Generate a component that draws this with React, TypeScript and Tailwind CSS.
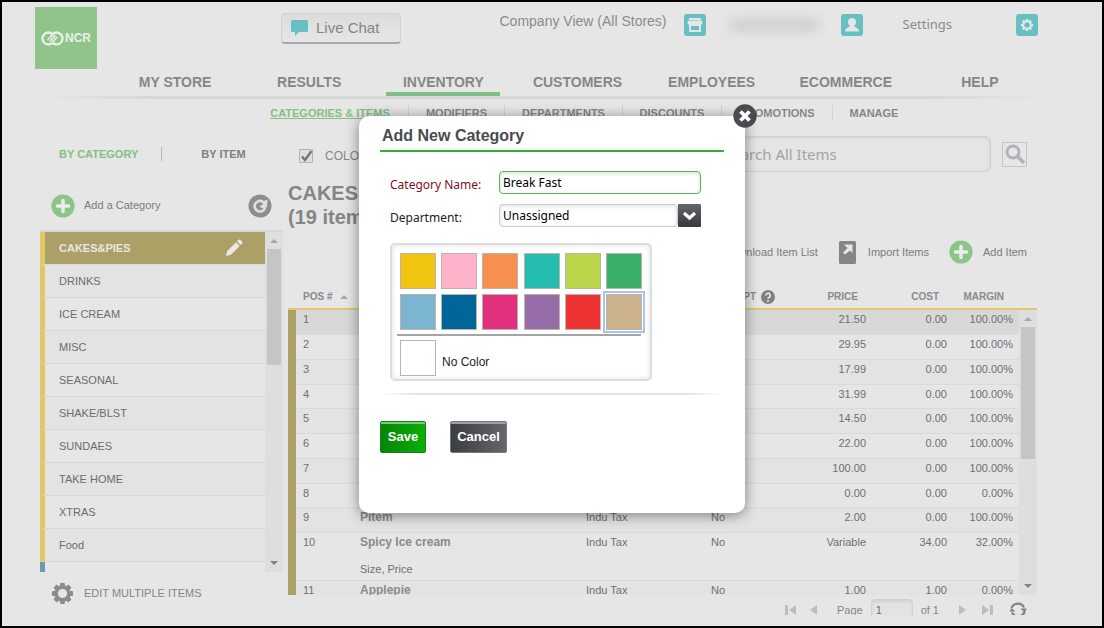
import { useState } from "react";
import type { ReactNode } from "react";

const navItems = ["MY STORE", "RESULTS", "INVENTORY", "CUSTOMERS", "EMPLOYEES", "ECOMMERCE", "HELP"];

const subNavItems = [
  { label: "CATEGORIES & ITEMS", width: "w-[157px]" },
  { label: "MODIFIERS", width: "w-[96px]" },
  { label: "DEPARTMENTS", width: "w-[118px]" },
  { label: "DISCOUNTS", width: "w-[99px]" },
  { label: "PROMOTIONS", width: "w-[111px]" },
  { label: "MANAGE", width: "w-[82px]" },
];

const categories = [
  "CAKES&PIES",
  "DRINKS",
  "ICE CREAM",
  "MISC",
  "SEASONAL",
  "SHAKE/BLST",
  "SUNDAES",
  "TAKE HOME",
  "XTRAS",
  "Food",
];

type Item = {
  pos: number;
  name?: string;
  note?: string;
  tax?: string;
  receipt?: string;
  price: string;
  cost: string;
  margin: string;
};

const items: Item[] = [
  { pos: 1, price: "21.50", cost: "0.00", margin: "100.00%" },
  { pos: 2, price: "29.95", cost: "0.00", margin: "100.00%" },
  { pos: 3, price: "17.99", cost: "0.00", margin: "100.00%" },
  { pos: 4, price: "31.99", cost: "0.00", margin: "100.00%" },
  { pos: 5, price: "14.50", cost: "0.00", margin: "100.00%" },
  { pos: 6, price: "22.00", cost: "0.00", margin: "100.00%" },
  { pos: 7, price: "100.00", cost: "0.00", margin: "100.00%" },
  { pos: 8, price: "0.00", cost: "0.00", margin: "0.00%" },
  { pos: 9, name: "Pitem", tax: "Indu Tax", receipt: "No", price: "2.00", cost: "0.00", margin: "100.00%" },
  {
    pos: 10,
    name: "Spicy Ice cream",
    note: "Size, Price",
    tax: "Indu Tax",
    receipt: "No",
    price: "Variable",
    cost: "34.00",
    margin: "32.00%",
  },
  { pos: 11, name: "Applepie", tax: "Indu Tax", receipt: "No", price: "1.00", cost: "1.00", margin: "0.00%" },
];

const swatches = [
  { name: "Yellow", color: "bg-[#f1c40f]" },
  { name: "Pink", color: "bg-[#ffb3cb]" },
  { name: "Orange", color: "bg-[#f78f50]" },
  { name: "Teal", color: "bg-[#24bdb0]" },
  { name: "Lime", color: "bg-[#bcd64c]" },
  { name: "Green", color: "bg-[#3aaf6a]" },
  { name: "Sky", color: "bg-[#7bb5d2]" },
  { name: "Blue", color: "bg-[#006699]" },
  { name: "Magenta", color: "bg-[#e2307c]" },
  { name: "Purple", color: "bg-[#966da9]" },
  { name: "Red", color: "bg-[#ee3432]" },
  { name: "Tan", color: "bg-[#ccb28a]" },
];

const GearShape = ({ hole }: { hole: string }) => (
  <>
    {[0, 45, 90, 135].map((angle) => (
      <rect key={angle} x="9.5" y="1" width="5" height="22" rx="1" transform={`rotate(${angle} 12 12)`} />
    ))}
    <circle cx="12" cy="12" r="8.5" />
    <circle cx="12" cy="12" r="4.8" fill={hole} />
  </>
);

const PlusCircle = () => (
  <svg viewBox="0 0 24 24" className="size-6 shrink-0">
    <circle cx="12" cy="12" r="11.6" fill="#8bc687" />
    <path d="M12 6.500v11M6.500 12h11" stroke="#ececec" strokeWidth="3.600" strokeLinecap="round" />
  </svg>
);

const Arrow = ({ up }: { up?: boolean }) => (
  <svg viewBox="0 0 8 4" className="h-1 w-2">
    <path d={up ? "M0 4L4 0l4 4z" : "M0 0h8L4 4z"} fill={up ? "#a8a8a8" : "#828282"} />
  </svg>
);

const ScrollBar = ({ thumb }: { thumb: string }) => (
  <div className="flex w-[18px] flex-1 flex-col items-center bg-[#dedede]">
    <div className="flex h-[17px] shrink-0 items-center">
      <Arrow up />
    </div>
    <div className={`w-[14px] bg-[#c5c5c5] ${thumb}`} />
    <div className="mt-auto flex h-[18px] shrink-0 items-center">
      <Arrow />
    </div>
  </div>
);

const TealIcon = ({ label, children }: { label: string; children: ReactNode }) => (
  <button aria-label={label} className="flex h-[22px] w-[22px] items-center justify-center rounded-[3px] bg-[#66bfc0]">
    <svg viewBox="0 0 22 22" className="size-[22px]" fill="#e6e6e6">
      {children}
    </svg>
  </button>
);

const Header = () => (
  <header>
    <div className="flex h-[67px] items-start pl-[33px] pr-[64px] pt-[5px]">
      <div className="flex h-[62px] w-[62px] shrink-0 items-center justify-center gap-px bg-[#91c48a] text-[#e9f0e8]">
        <svg viewBox="0 0 23 15" className="h-[15px] w-[23px]" fill="none" stroke="currentColor">
          <circle cx="7.500" cy="7.500" r="6" strokeWidth="2.400" />
          <circle cx="15.500" cy="7.500" r="6" strokeWidth="2.400" />
          <path d="M7 9.500l6-5M10 11l6-5" stroke="#91c48a" strokeWidth="3.400" />
          <path d="M6.500 9l6-5.500M10.500 11.500l6-5.500M8.500 10.300l6-5.500" strokeWidth="1.500" />
        </svg>
        <span className="text-xs font-semibold">NCR</span>
      </div>
      <button className="ml-[184px] mt-1.5 flex h-[31px] w-[120px] items-center gap-2 rounded-[4px] border border-[#d2d2d2] border-b-2 border-b-[#a9a9a9] bg-linear-to-b from-[#dcdcdc] to-[#e6e6e6] pl-[9px] text-[15px] text-[#858585]">
        <svg viewBox="0 0 17 16" className="h-4 w-[17px]" fill="#66bfc0">
          <path d="M1.500 0h14A1.500 1.500 0 0 1 17 1.500v9A1.500 1.500 0 0 1 15.500 12H8l-4 4v-4H1.500A1.500 1.500 0 0 1 0 10.500v-9A1.500 1.500 0 0 1 1.500 0z" />
        </svg>
        Live Chat
      </button>
      <div className="ml-auto flex items-center pt-1 text-[13px] text-[#8b8b8b]">
        <span className="pb-2 text-sm">Company View (All Stores)</span>
        <span className="ml-[17px]">
          <TealIcon label="Stores">
            <path d="M5 4h12v2H5zM4 6.500h14l.5 3a2 2 0 0 1-3 .8 2.500 2.500 0 0 1-3 0 2.500 2.500 0 0 1-3 0 2.500 2.500 0 0 1-3 0 2 2 0 0 1-3-.8z" />
            <path d="M5 10h12v8H5zM7 12v4h8v-4z" fillRule="evenodd" />
          </TealIcon>
        </span>
        <span className="ml-6 h-2.5 w-[88px] bg-[#c9c9c9] blur-[6px]" />
        <span className="ml-[23px]">
          <TealIcon label="Account">
            <path d="M11 4a4 4 0 0 1 4 4c0 1.800-.8 3-1.800 4 .2 1 4.300 1.500 4.800 5.500H4c.5-4 4.600-4.500 4.800-5.500C7.800 11 7 9.800 7 8a4 4 0 0 1 4-4z" />
          </TealIcon>
        </span>
        <a href="#settings" className="mx-10 font-['Noto_Sans',sans-serif]">
          Settings
        </a>
        <span className="ml-6">
          <TealIcon label="Settings">
            <g transform="translate(4.400 4.400) scale(.55)">
              <GearShape hole="#66bfc0" />
            </g>
          </TealIcon>
        </span>
      </div>
    </div>

    <nav className="grid h-[27px] grid-cols-7 pl-[106px] pr-[55px] text-center text-sm font-bold leading-[27px] text-[#868686]">
      {navItems.map((item) => (
        <a
          key={item}
          href="#nav"
          className={
            item === "INVENTORY"
              ? "mx-[10px] h-[27px] border-b-4 border-[#7fbf83]"
              : "mx-[10px] h-[27px]"
          }
        >
          {item}
        </a>
      ))}
    </nav>
    <div className="ml-[38px] mr-[60px] h-[3px] bg-[linear-gradient(to_right,transparent,#d6d6d6_12%,#d6d6d6_88%,transparent)]" />
    <nav className="flex h-[28px] items-center pl-[250px] text-[11px] font-bold text-[#868686]">
      {subNavItems.map((item, i) => (
        <div
          key={item.label}
          className={`flex h-4 shrink-0 items-center justify-center border-r border-[#d2d2d2] last:border-r-0 ${item.width}`}
        >
          <a href="#sub" className={i === 0 ? "text-[#83c082] underline" : ""}>
            {item.label}
          </a>
        </div>
      ))}
    </nav>
  </header>
);

const CategoryPanel = () => (
  <aside className="w-[243px] shrink-0 text-[11px]">
    <div className="flex h-[54px] items-center pl-[19px] font-bold text-[#808080]">
      <a href="#category" className="text-[#83c082]">
        BY CATEGORY
      </a>
      <span className="ml-[23px] mr-[39px] h-[14px] w-px bg-[#b8b8b8]" />
      <a href="#item">BY ITEM</a>
    </div>
    <div className="flex h-[49px] items-center px-[11px] text-[#7c7c7c]">
      <button className="flex items-center gap-[9px]">
        <PlusCircle />
        Add a Category
      </button>
      <button aria-label="Refresh" className="ml-auto">
        <svg viewBox="0 0 24 24" className="size-6" fill="none">
          <circle cx="12" cy="12" r="11.500" fill="#8e8e8e" />
          <path d="M15 7.800A5.300 5.300 0 1 0 17 14" stroke="#e0e0e0" strokeWidth="2.600" />
          <path d="M11 11.500c1.500.5 3 0 4-1.500l-1.500-2 6-2.500-.500 7.500c-3 2-6 1.500-8-1.500z" fill="#e0e0e0" />
        </svg>
      </button>
    </div>
    <div className="flex h-[342px] overflow-hidden border-t-2 border-[#d6d6d6]">
      <ul className="flex-1">
        {categories.map((category, i) => (
          <li
            key={category}
            className={
              i === 0
                ? "flex h-[33px] items-center border-b border-l-[5px] border-b-[#dcdcdc] border-l-[#e0c868] bg-[#ada067] pl-[14px] pr-[22px] font-bold text-[#e6e6e6]"
                : "flex h-[33px] items-center border-b border-l-[5px] border-b-[#dadada] border-l-[#e0c868] pl-[14px] text-[#6c6c6c] even:bg-[#e3e3e3]"
            }
          >
            {category}
            {i === 0 && (
              <svg viewBox="0 0 18 18" className="ml-auto size-[18px]" fill="#e8e8e8">
                <path d="M1 17l1.200-5L11 3.200 14.800 7 6 15.800zM12 2.200l1-1a2 2 0 0 1 2.800 0l1 1a2 2 0 0 1 0 2.800l-1 1z" />
              </svg>
            )}
          </li>
        ))}
        <li className="h-[33px] border-l-[5px] border-l-[#6b9ab5]" />
      </ul>
      <div className="flex flex-col">
        <ScrollBar thumb="h-[116px]" />
      </div>
    </div>
    <button className="mt-[10px] flex items-center gap-[10px] pl-[11px] text-[#858585]">
      <svg viewBox="0 0 24 24" className="size-[23px]" fill="#8c8c8c">
        <GearShape hole="#e6e6e6" />
      </svg>
      EDIT MULTIPLE ITEMS
    </button>
  </aside>
);

const ItemTable = () => (
  <div className="flex h-[309px] overflow-hidden">
    <table className="h-max flex-1 table-fixed border-separate border-spacing-0 text-left text-[11px] text-[#6f6f6f]">
      <thead className="text-[10px] text-[#8a8a8a]">
        <tr className="h-6 [&>th]:border-b-2 [&>th]:border-[#e2c964] [&>th]:pb-px">
          <th className="w-[72px] pl-[15px]">
            <span className="flex items-center gap-2">
              POS # <Arrow up />
            </span>
          </th>
          <th>NAME</th>
          <th className="w-[125px]">TAX</th>
          <th className="w-[86px]">
            <span className="flex items-center justify-end gap-[5px] pr-[22px]">
              RECEIPT
              <svg viewBox="0 0 14 14" className="size-[14px] shrink-0" fill="none">
                <circle cx="7" cy="7" r="7" fill="#808080" />
                <path d="M4.800 5.400a2.200 2.200 0 1 1 3.200 2c-.8.4-1 .7-1 1.300" stroke="#e6e6e6" strokeWidth="1.700" />
                <circle cx="7" cy="10.900" r="1" fill="#e6e6e6" />
              </svg>
            </span>
          </th>
          <th className="w-[75px] pr-[14px] text-right">PRICE</th>
          <th className="w-[81px] pr-[14px] text-right">COST</th>
          <th className="w-[66px] pr-[15px] text-right">MARGIN</th>
        </tr>
      </thead>
      <tbody className="align-top leading-[19px]">
        {items.map((item) => (
          <tr
            key={item.pos}
            className="h-[25px] odd:bg-[#e3e3e3] first:bg-[#d8d8d8]! [&:nth-child(4n)]:h-6 [&>td+td]:border-b [&>td+td]:border-[#dadada]"
          >
            <td className="pl-[15px] shadow-[inset_8px_0_0_#ada067,inset_0_-1px_0_#dadada]">{item.pos}</td>
            <td>
              <span className="block text-xs font-bold leading-[19px] text-[#8a8a8a]">{item.name}</span>
              {item.note && <span className="block pb-px pt-2">{item.note}</span>}
            </td>
            <td>{item.tax}</td>
            <td>{item.receipt}</td>
            <td className="pr-1.5 text-right">{item.price}</td>
            <td className="pr-1.5 text-right">{item.cost}</td>
            <td className="pr-1.5 text-right">{item.margin}</td>
          </tr>
        ))}
      </tbody>
    </table>
    <div className="flex flex-col">
      <div className="h-6 border-b-2 border-[#e2c964]" />
      <ScrollBar thumb="h-[132px]" />
    </div>
  </div>
);

const Pager = () => (
  <div className="flex h-5 items-start justify-end overflow-hidden pr-[10px] text-[11px] text-[#868686]">
    <div className="flex h-[30px] items-center">
      <button aria-label="First page">
        <svg viewBox="0 0 11 10" className="h-[10px] w-[11px]" fill="#bdbdbd">
          <path d="M0 0h3v10H0zM11 0v10L4 5z" />
        </svg>
      </button>
      <button aria-label="Previous page" className="ml-[14px]">
        <svg viewBox="0 0 7 10" className="h-[10px] w-[7px]" fill="#bdbdbd">
          <path d="M7 0v10L0 5z" />
        </svg>
      </button>
      <label className="ml-5 flex items-center gap-2">
        Page
        <input
          defaultValue="1"
          className="h-[22px] w-[42px] rounded-[4px] border border-[#d0d0d0] bg-[#e3e3e3] pl-1 text-[#6c6c6c] shadow-[inset_0_2px_3px_#d2d2d2]"
        />
      </label>
      <span className="ml-2">of 1</span>
      <button aria-label="Next page" className="ml-5">
        <svg viewBox="0 0 7 10" className="h-[10px] w-[7px]" fill="#bdbdbd">
          <path d="M0 0v10l7-5z" />
        </svg>
      </button>
      <button aria-label="Last page" className="ml-4">
        <svg viewBox="0 0 11 10" className="h-[10px] w-[11px]" fill="#bdbdbd">
          <path d="M8 0h3v10H8zM0 0v10l7-5z" />
        </svg>
      </button>
      <button aria-label="Reload" className="ml-4">
        <svg viewBox="0 0 18 16" className="h-4 w-[18px]" fill="none" stroke="#828282" strokeWidth="2.200">
          <path d="M2.500 6a6.800 6.800 0 0 1 12.500-.5M15.500 10a6.800 6.800 0 0 1-12.500.5" />
          <path d="M11.500 6.500h6L16 11zM.5 9.500h6L2.500 6z" fill="#828282" stroke="none" />
        </svg>
      </button>
    </div>
  </div>
);

const ItemPanel = () => (
  <section className="min-w-0 flex-1 pl-[5px]">
    <div className="flex h-[54px] items-center pr-[10px]">
      <label className="flex items-center gap-3 pl-[11px] pt-1 text-xs text-[#858585]">
        <input type="checkbox" defaultChecked className="peer sr-only" />
        <svg viewBox="0 0 14 14" className="size-[14px]" fill="none">
          <path d="M.5.500h13v13H.5z" stroke="#b3b3b3" fill="#dfdfdf" />
          <path d="M3 7.500l3 3.500 6.500-9" stroke="#777777" strokeWidth="2.400" />
        </svg>
        COLOR CODING
      </label>
      <input
        aria-label="Search All Items"
        placeholder="Search All Items"
        className="ml-auto h-9 w-[280px] rounded-[6px] border border-[#d0d0d0] bg-[#e5e5e5] pl-3 font-['Noto_Sans',sans-serif] text-[15px] text-[#666666] shadow-[inset_0_1px_3px_#d0d0d0] placeholder:text-[#a3a3a3]"
      />
      <button aria-label="Search" className="ml-[11px] flex size-[25px] items-center justify-center border border-[#c3c6cb]">
        <svg viewBox="0 0 20 20" className="size-5" fill="none" stroke="#b0b3b7" strokeWidth="3">
          <circle cx="8" cy="8" r="6" />
          <path d="M12 12l7 7" strokeWidth="3.600" />
        </svg>
      </button>
    </div>
    <h1 className="w-[150px] text-xl font-bold leading-6 text-[#858585]">CAKES&PIES (19 items)</h1>
    <div className="mt-[11px] flex h-6 items-center justify-end pr-[10px] text-[11px] text-[#7c7c7c]">
      <button>Download Item List</button>
      <button className="ml-[21px] flex items-center gap-3">
        <svg viewBox="0 0 17 23" className="h-[23px] w-[17px]" fill="none">
          <rect width="17" height="23" rx="1.500" fill="#858585" />
          <path d="M5 3.500h8.500V12l-2.500-2.500-5 4-2-2 4.500-4.500z" fill="#e6e6e6" />
        </svg>
        Import Items
      </button>
      <button className="ml-5 flex items-center gap-2.5">
        <PlusCircle />
        Add Item
      </button>
    </div>
    <div className="mt-[22px]">
      <ItemTable />
    </div>
    <Pager />
  </section>
);

const AddCategoryDialog = () => {
  const [color, setColor] = useState("Tan");

  const swatchClass =
    "size-9 cursor-pointer appearance-none border border-[#b9b5a8] outline-2 outline-offset-1 outline-transparent checked:outline-[#a4c4f4]";

  return (
    <div
      role="dialog"
      aria-labelledby="dialog-title"
      className="relative h-[397px] w-[386px] rounded-[10px] bg-white px-[21px] pt-2 shadow-[0_2px_14px_rgba(0,0,0,0.45)]"
    >
      <button aria-label="Close" className="absolute -right-3 -top-3 size-6">
        <svg viewBox="0 0 24 24" className="size-6">
          <circle cx="12" cy="12" r="11.700" fill="#4a4b4f" />
          <path d="M7.500 7.500l9 9m0-9l-9 9" stroke="#fff" strokeWidth="3.800" />
        </svg>
      </button>
      <h2 id="dialog-title" className="h-7 border-b-2 border-[#34b034] pl-[2px] text-base leading-6 font-bold text-[#4a4b50]">
        Add New Category
      </h2>
      <form onSubmit={(e) => e.preventDefault()} className="pl-[10px]">
        <div className="mt-[19px] flex items-center font-['Noto_Sans',sans-serif] text-xs">
          <label htmlFor="category-name" className="w-[109px] pt-1 text-[#7f1021]">
            Category Name:
          </label>
          <input
            id="category-name"
            defaultValue="Break Fast"
            className="h-[23px] w-[202px] rounded-[4px] border border-[#5cb360] pl-[3px] text-black shadow-[inset_0_1px_4px_#cfe0cf] outline-none"
          />
        </div>
        <div className="mt-2.5 flex items-center font-['Noto_Sans',sans-serif] text-xs text-[#222222]">
          <label htmlFor="department" className="w-[109px] pt-1">
            Department:
          </label>
          <div className="grid w-[202px]">
            <select
              id="department"
              className="col-start-1 row-start-1 mr-[23px] h-[23px] appearance-none rounded-[4px] border border-[#cccccc] pl-[3px] text-black shadow-[inset_0_1px_4px_#dddddd]"
            >
              <option>Unassigned</option>
            </select>
            <svg viewBox="0 0 23 23" className="pointer-events-none col-start-1 row-start-1 size-[23px] justify-self-end">
              <defs>
                <linearGradient id="arrow-bg" x1="0" y1="0" x2="0" y2="1">
                  <stop offset="0" stopColor="#65666b" />
                  <stop offset="1" stopColor="#37383c" />
                </linearGradient>
              </defs>
              <rect width="23" height="23" rx="1" fill="url(#arrow-bg)" />
              <path d="M6 9l5.500 5L17 9" fill="none" stroke="#fff" strokeWidth="3.200" />
            </svg>
          </div>
        </div>
        <fieldset className="mt-4 h-[138px] w-[262px] rounded-[5px] border-2 border-[#dddddd] px-[5px] pt-2 shadow-[inset_0_0_5px_#dddddd]">
          <div className="grid grid-cols-[repeat(6,36px)] justify-between gap-y-[5px] px-[3px]">
            {swatches.map((s) => (
              <input
                key={s.name}
                type="radio"
                name="color"
                aria-label={s.name}
                checked={color === s.name}
                onChange={() => setColor(s.name)}
                className={`${swatchClass} ${s.color}`}
              />
            ))}
          </div>
          <hr className="mr-1 mt-1 border-t-2 border-[#a5a5a5]" />
          <label className="flex items-center gap-1.5 px-[3px] pt-1 text-xs text-[#222222]">
            <input
              type="radio"
              name="color"
              checked={color === "None"}
              onChange={() => setColor("None")}
              className={`${swatchClass} bg-white`}
            />
            <span className="pt-2">No Color</span>
          </label>
        </fieldset>
        <div className="-ml-[10px] mt-3 h-[2px] bg-[linear-gradient(to_right,transparent,#e2e2e2_12%,#e2e2e2_88%,transparent)]" />
        <div className="-ml-[10px] mt-[26px] flex gap-6 text-[13px] font-bold text-white">
          <button className="h-8 w-[46px] rounded-[2px] border border-[#1d7a1d] bg-linear-to-r from-[#078507] to-[#08b008] shadow-[inset_0_2px_0_#7ccb7c]">
            Save
          </button>
          <button
            type="button"
            className="h-8 w-[57px] rounded-[2px] border border-[#77787c] bg-linear-to-r from-[#3c3d41] to-[#66676c] shadow-[inset_0_2px_0_#a0a1a5]"
          >
            Cancel
          </button>
        </div>
      </form>
    </div>
  );
};

const App = () => {
  return (
    <div className="relative min-h-screen overflow-hidden border-2 border-black bg-[#e6e6e6] font-['Liberation_Sans',Arial,sans-serif]">
      <Header />
      <main className="flex pl-[38px] pr-[65px]">
        <CategoryPanel />
        <ItemPanel />
      </main>
      <div className="absolute inset-0 flex items-start justify-center pt-[114px]">
        <AddCategoryDialog />
      </div>
    </div>
  );
};

export default App;
